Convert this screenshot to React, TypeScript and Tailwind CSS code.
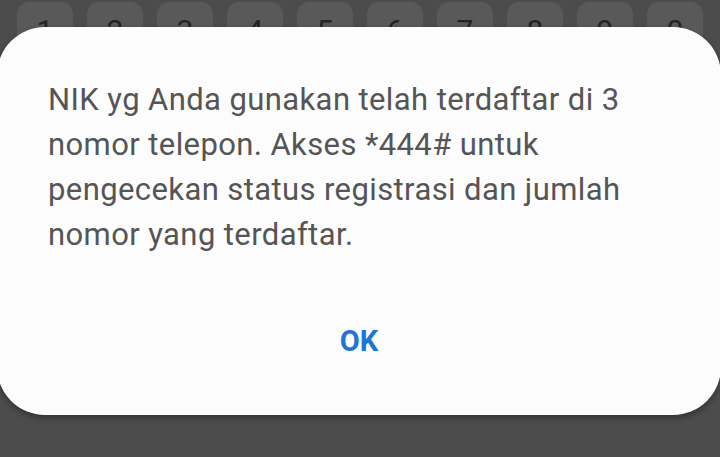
const keys = ["1", "2", "3", "4", "5", "6", "7", "8", "9", "0"];

const App = () => {
  return (
    <div className="relative h-[457px] w-[720px] overflow-hidden bg-[#4c4c4c] font-['Roboto',sans-serif]">
      {/* keyboard number row, mostly hidden behind the dialog */}
      <div className="flex gap-[14px] px-[17px] pt-[2px]">
        {keys.map((k) => (
          <div
            key={k}
            className="flex h-[64px] w-[56px] justify-center rounded-[12px] bg-[#595959] pt-[14px] text-[30px] leading-none text-[#232323]"
          >
            {k}
          </div>
        ))}
      </div>

      {/* alert dialog */}
      <div className="absolute left-[-3px] right-[-1px] top-[27px] flex h-[388px] flex-col rounded-[48px] bg-[#fcfcfc] shadow-[0_3px_6px_rgba(0,0,0,0.35)]">
        <p className="pl-[51px] pr-[60px] pt-[50px] text-[31px] leading-[45px] tracking-[0.4px] text-[#555555]">
          NIK yg Anda gunakan telah terdaftar di 3 nomor telepon. Akses *444# untuk pengecekan status registrasi dan jumlah nomor yang terdaftar.
        </p>
        <div className="mt-auto flex justify-center pb-[59px]">
          <button className="text-[29px] font-bold leading-none text-[#1b76d4]">OK</button>
        </div>
      </div>
    </div>
  );
};

export default App;
